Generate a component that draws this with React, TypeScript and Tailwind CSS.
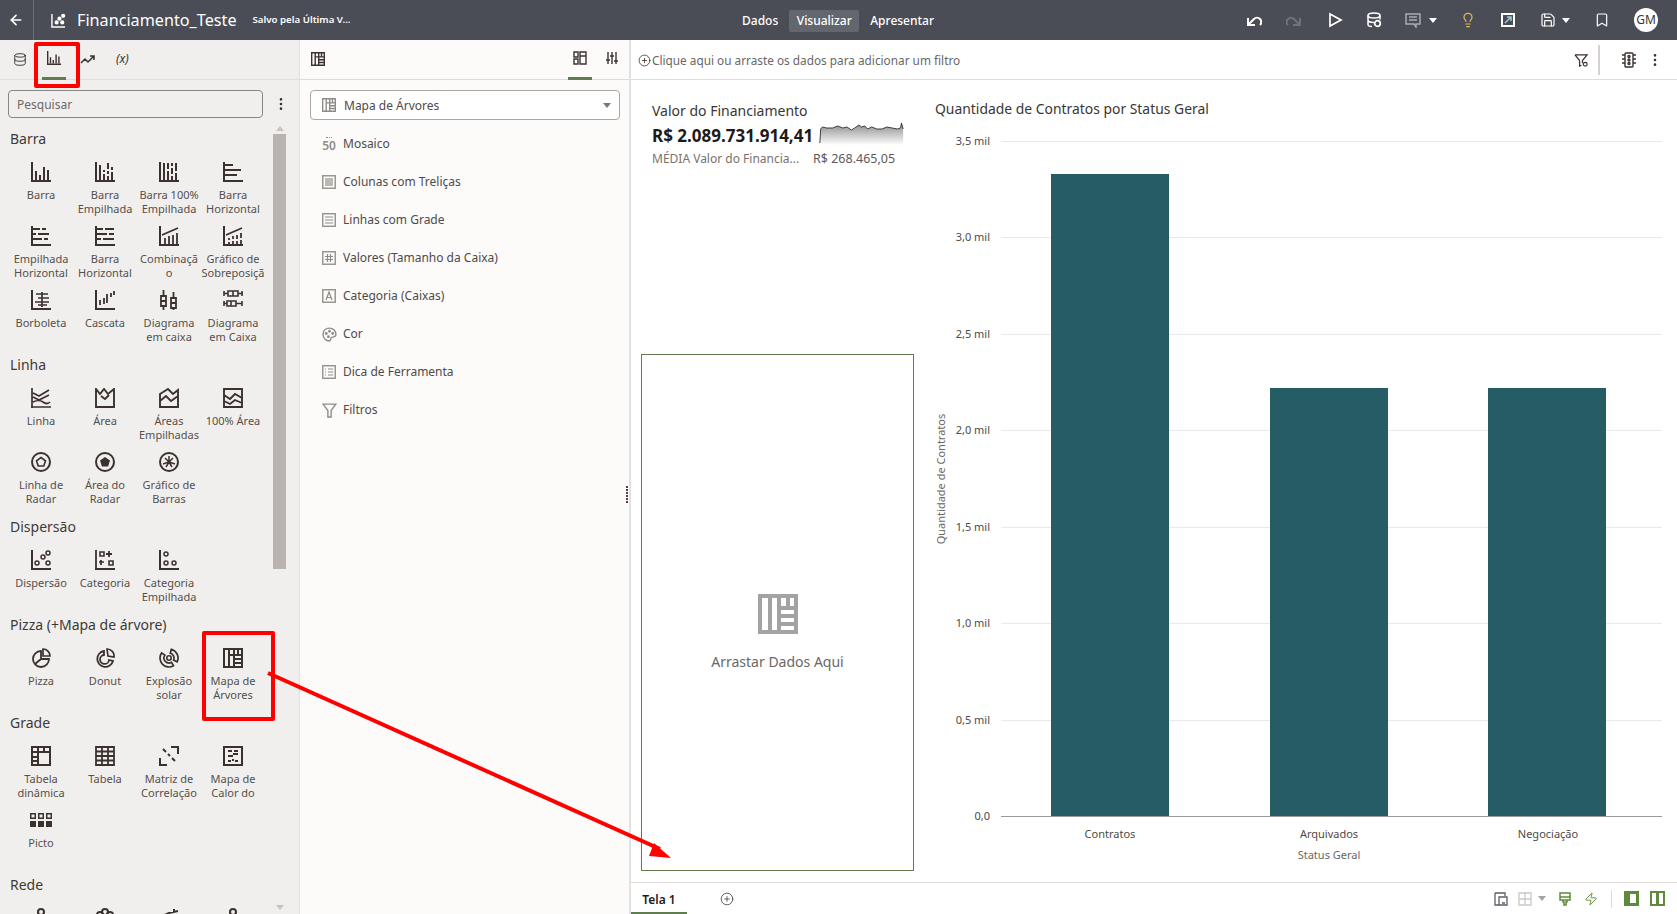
import type { ReactNode } from 'react';
import {
  ArrowLeft,
  Bookmark,
  CirclePlus,
  Database,
  EllipsisVertical,
  Lightbulb,
  Save,
  Zap,
} from 'lucide-react';

function Ico({ children, size = 20, className = '' }: { children: ReactNode; size?: number; className?: string }) {
  return (
    <svg
      viewBox="0 0 20 20"
      width={size}
      height={size}
      fill="none"
      stroke="currentColor"
      strokeWidth={2}
      className={className}
    >
      {children}
    </svg>
  );
}

const axis = <path d="M1 0v20M0 19h20" />;
const treemap = (
  <path
    d="M1 1h18v18H1zM6 1v18M11 1v18M6 7h13M11 11h8M11 15h8M15 1v6"
    strokeWidth={2}
  />
);

const shapes: Record<string, ReactNode> = {
  bar: <>{axis}<path d="M5 9v9M9 13v5M13 5v13M17 8v10" /></>,
  stacked: <>{axis}<path d="M5 3v15M9 8v2M9 12v6M13 1v6M13 9v3M13 14v4M17 5v3M17 10v8" /></>,
  stacked100: <>{axis}<path d="M5 1v17M9 1v6M9 9v9M13 1v3M13 6v6M13 14v4M17 1v8M17 11v7" /></>,
  hbar: <><path d="M1 0v20M0 19h20M2 3h8M2 8h16M2 13h12" /></>,
  hstacked: <><path d="M1 0v20M0 19h20M2 3h7M11 3h4M2 8h3M7 8h11M2 13h9M13 13h4" /></>,
  hbar2: <><path d="M1 0v20M0 19h20M2 3h6M10 3h9M2 8h10M14 8h5M2 13h4M8 13h11" /></>,
  combo: <>{axis}<path d="M3 9L19 2M6 12v6M10 10v8M14 9v9M18 7v11" strokeWidth={1.8} /></>,
  overlay: <>{axis}<path d="M3 9L19 2M6 12v2M6 16v2M10 10v3M10 15v3M14 9v4M14 15v3M18 7v5M18 14v4" strokeWidth={1.8} /></>,
  butterfly: <>{axis}<path d="M11 2v15M5 4h12M7 8h11M4 12h14M7 15h9" strokeWidth={1.7} /></>,
  waterfall: <>{axis}<path d="M5 10v5M9 8v6M12 4v9M16 3v4M19 1v4" strokeWidth={1.8} /></>,
  boxv: (
    <>
      <path d="M2 6h5v10H2zM12 8h5v10h-5zM4.500 0v6M4.500 16v4M14.500 2v6M14.500 18v2M2 11h5M12 13h5" strokeWidth={1.8} />
    </>
  ),
  boxh: (
    <>
      <path d="M5 1h10v5H5zM4 11h9v5H4zM1 3.500h4M15 3.500h5M1 13.500h3M13 13.500h6M1 1v5M19 1v5M1 11v5M19 11v5M10 1v5M8 11v5" strokeWidth={1.6} />
    </>
  ),
  line: <><path d="M1 0v20M0 19h20M2 5L8 8L18 2M2 9L8 12L18 7M2 14Q8 11 12 14T19 14" strokeWidth={1.7} /></>,
  area: <path d="M1 1v18h18V1L13 6L9 1L5 6z M6 8l4 3l4-4" strokeWidth={1.9} />,
  areas: <path d="M1 6L9 1L14 6L19 2v17H1zM1 13L7 8L12 13L19 8" strokeWidth={1.9} />,
  area100: <path d="M1 1h18v18H1zM1 7L7 11L12 6L19 10M1 13L7 16L12 12L19 15" strokeWidth={1.9} />,
  radarline: <><circle cx="10" cy="10" r="9" /><path d="M10 5.500l4.500 3.300l-1.700 5.200H7.200L5.500 8.800z" strokeWidth={1.6} /></>,
  radararea: <><circle cx="10" cy="10" r="9" /><path d="M10 5l5 3.600l-1.900 5.800H6.900L5 8.600z" fill="currentColor" stroke="none" /></>,
  radial: <><circle cx="10" cy="10" r="9" /><path d="M10 10V4M10 10l6 2M10 10l-6 2M10 10l-4-4M10 10l4-4M10 10l3 5M10 10l-3 5" strokeWidth={1.5} /></>,
  scatter: <><path d="M1 0v20M0 19h20" /><circle cx="6" cy="13" r="2" strokeWidth={1.5} /><circle cx="12" cy="7" r="2" strokeWidth={1.5} /><circle cx="17" cy="3" r="2" strokeWidth={1.5} /><circle cx="17" cy="13" r="2" strokeWidth={1.5} /></>,
  category: <><path d="M1 0v20M0 19h20M14 1v6M11 4h6M6 10v5" strokeWidth={1.8} /><path d="M5 2h4v4H5zM14 11h4v4h-4zM4 12h5" strokeWidth={1.6} /></>,
  catstack: <><path d="M1 0v20M0 19h20" /><circle cx="7" cy="4" r="2" strokeWidth={1.5} /><circle cx="7" cy="13" r="2" strokeWidth={1.5} /><circle cx="15" cy="13" r="2" strokeWidth={1.5} /></>,
  pie: <><path d="M10 3a8 8 0 1 0 8 8h-8z M10 11l-6 5" strokeWidth={1.8} /><path d="M12 1a7 7 0 0 1 7 7h-7z" strokeWidth={1.7} /></>,
  donut: <><path d="M9 3a8 8 0 1 0 9 10l-4-1a4.500 4.500 0 1 1-5-5z" strokeWidth={1.8} /><path d="M12 1a7 7 0 0 1 7 8l-6-1z" strokeWidth={1.7} /></>,
  sunburst: (
    <>
      <circle cx="10" cy="10" r="2.200" strokeWidth={1.600} />
      <path
        d="M12.330 1.310A9 9 0 0 1 18.160 13.800L14.530 12.110A5 5 0 0 0 11.290 5.170zM14.500 17.790A9 9 0 0 1 2.630 4.840L5.900 7.130A5 5 0 0 0 12.500 14.330z"
        strokeWidth={1.700}
      />
    </>
  ),
  treemap,
  pivot: <path d="M1 1h18v18H1zM1 6h18M7 1v18M13 1v5M1 11h6M1 15h6" />,
  table: <path d="M1 1h18v18H1zM1 5.500h18M1 10h18M1 14.500h18M7 1v18M13 1v18" strokeWidth={1.8} />,
  corr: <path d="M12 1h7v7M8 19H1v-7M4 3l3 3M9 8l2 2M13 12l3 3" />,
  heat: <path d="M1 1h18v18H1zM5 5h4M11 5h4M10 8h5M5 10h5M10 13v2M5 15h3M12 15h3" />,
  rede1: <><circle cx="10" cy="4" r="3" /><circle cx="4" cy="16" r="3" /><circle cx="16" cy="16" r="3" /></>,
  rede2: <><circle cx="5" cy="7" r="3" /><circle cx="10" cy="4" r="3" /><circle cx="15" cy="7" r="3" /></>,
  rede3: <path d="M1 9L10 5L19 3M15 1v4" />,
  rede4: <><circle cx="10" cy="4" r="3" /><path d="M10 7v9" /></>,
};

function Picto() {
  return (
    <svg viewBox="0 0 22 20" width={22} height={20} fill="currentColor">
      {[0, 8, 16].map((x) => (
        <rect key={x} x={x + 0.75} y={3.750} width={4.500} height={4.500} fill="none" stroke="currentColor" strokeWidth={1.500} />
      ))}
      {[0, 8, 16].map((x) => (
        <rect key={x} x={x} y={11} width={6} height={6} />
      ))}
    </svg>
  );
}

type Viz = [string, string];

const sections: { title: string; items: Viz[] }[] = [
  {
    title: 'Barra',
    items: [
      ['bar', 'Barra'],
      ['stacked', 'Barra\nEmpilhada'],
      ['stacked100', 'Barra 100%\nEmpilhada'],
      ['hbar', 'Barra\nHorizontal'],
      ['hstacked', 'Empilhada\nHorizontal'],
      ['hbar2', 'Barra\nHorizontal'],
      ['combo', 'Combinaçã\no'],
      ['overlay', 'Gráfico de\nSobreposiçã'],
      ['butterfly', 'Borboleta'],
      ['waterfall', 'Cascata'],
      ['boxv', 'Diagrama\nem caixa'],
      ['boxh', 'Diagrama\nem Caixa'],
    ],
  },
  {
    title: 'Linha',
    items: [
      ['line', 'Linha'],
      ['area', 'Área'],
      ['areas', 'Áreas\nEmpilhadas'],
      ['area100', '100% Área'],
      ['radarline', 'Linha de\nRadar'],
      ['radararea', 'Área do\nRadar'],
      ['radial', 'Gráfico de\nBarras'],
    ],
  },
  {
    title: 'Dispersão',
    items: [
      ['scatter', 'Dispersão'],
      ['category', 'Categoria'],
      ['catstack', 'Categoria\nEmpilhada'],
    ],
  },
  {
    title: 'Pizza (+Mapa de árvore)',
    items: [
      ['pie', 'Pizza'],
      ['donut', 'Donut'],
      ['sunburst', 'Explosão\nsolar'],
      ['treemap', 'Mapa de\nÁrvores'],
    ],
  },
  {
    title: 'Grade',
    items: [
      ['pivot', 'Tabela\ndinâmica'],
      ['table', 'Tabela'],
      ['corr', 'Matriz de\nCorrelação'],
      ['heat', 'Mapa de\nCalor do'],
      ['picto', 'Picto'],
    ],
  },
  {
    title: 'Rede',
    items: [
      ['rede1', ''],
      ['rede2', ''],
      ['rede3', ''],
      ['rede4', ''],
    ],
  },
];

function VizItem({ icon, label }: { icon: string; label: string }) {
  return (
    <div className="flex h-16 flex-col items-center">
      <div className="flex h-5 items-center text-[#3b322f]">
        {icon === 'picto' ? <Picto /> : <Ico>{shapes[icon]}</Ico>}
      </div>
      <div className="mt-[6px] w-16 overflow-hidden text-center text-[11px] leading-[14px] whitespace-pre-line text-[#55504c]">
        {label}
      </div>
    </div>
  );
}

function VizPanel() {
  return (
    <aside className="relative flex h-full w-[300px] shrink-0 flex-col overflow-hidden border-r border-[#e2e0de] bg-[#f1efed]">
      <div className="flex h-10 shrink-0 items-center border-b border-[#dfdddb] text-[#3b322f]">
        <div className="ml-[13px] flex w-[14px] justify-center">
          <Database size={15} strokeWidth={1.6} />
        </div>
        <div className="relative ml-[15px] flex h-10 w-[24px] items-center justify-center pb-[3px]">
          <Ico size={14}>{shapes.bar}</Ico>
          <div className="absolute right-0 bottom-0 left-0 h-[3px] bg-[#5f7d4f]" />
        </div>
        <svg viewBox="0 0 16 12" width={16} height={12} fill="none" stroke="currentColor" strokeWidth={1.500} className="mb-px ml-[14px]">
          <path d="M1 10l4-4l3 3l6-6M10 3h4v4" />
        </svg>
        <span className="mb-[2px] ml-[20px] text-[12px] italic">(x)</span>
      </div>
      <div className="flex shrink-0 items-center pt-[10px] pl-2">
        <div className="flex h-[28px] w-[255px] items-center rounded-[4px] border border-[#8a8582] px-2 pt-px text-[12px] text-[#6f6865]">
          Pesquisar
        </div>
        <EllipsisVertical size={16} className="ml-[10px] text-[#3b322f]" />
      </div>
      <div className="relative flex-1 overflow-hidden">
        <div className="absolute top-[8px] right-[13px] bottom-[20px] w-[13px]">
          <div className="absolute top-0 left-[3px] border-x-[4px] border-b-[5px] border-x-transparent border-b-[#c7c3bf]" />
          <div className="absolute top-[8px] right-0 left-0 h-[435px] bg-[#b9b4b0]" />
        </div>
        <div className="absolute right-[13px] bottom-[4px] w-[13px]">
          <div className="mx-auto h-0 w-0 border-x-[4px] border-t-[5px] border-x-transparent border-t-[#c7c3bf]" />
        </div>
        <div className="pt-[10px] pl-[9px]">
          {sections.map((s) => (
            <div key={s.title}>
              <div className="mb-3 h-[22px] pl-px text-[14px] leading-[22px] text-[#3e3a37]">{s.title}</div>
              <div className="grid w-64 grid-cols-4">
                {s.items.map(([icon, label], i) => (
                  <VizItem key={i} icon={icon} label={label} />
                ))}
              </div>
            </div>
          ))}
        </div>
      </div>
    </aside>
  );
}

function BoxGlyph({ children }: { children: ReactNode }) {
  return (
    <svg viewBox="0 0 14 14" width={14} height={14} fill="none" stroke="#8f8b87" strokeWidth={1.200}>
      <rect x={0.750} y={0.750} width={12.500} height={12.500} stroke="#9a9692" strokeWidth={1.500} />
      {children}
    </svg>
  );
}

const grammar: { label: string; icon: ReactNode }[] = [
  {
    label: 'Mosaico',
    icon: (
      <span className="flex flex-col items-center text-[12px] leading-[10px] font-semibold text-[#8f8b87]">
        <span className="mb-px h-[3px] w-[6px] border-t border-dotted border-[#8f8b87]" />
        50
      </span>
    ),
  },
  { label: 'Colunas com Treliças', icon: <BoxGlyph><path d="M4 3v8M6 3v8M8 3v8M10 3v8" /></BoxGlyph> },
  { label: 'Linhas com Grade', icon: <BoxGlyph><path d="M3 4h8M3 7h8M3 10h8" /></BoxGlyph> },
  { label: 'Valores (Tamanho da Caixa)', icon: <BoxGlyph><path d="M5.500 3v8M8.500 3v8M3 5.500h8M3 8.500h8" /></BoxGlyph> },
  { label: 'Categoria (Caixas)', icon: <BoxGlyph><path d="M4 11l3-8l3 8M5 8.500h4" /></BoxGlyph> },
  {
    label: 'Cor',
    icon: (
      <svg viewBox="0 0 14 14" width={15} height={15} fill="none" stroke="#8f8b87" strokeWidth={1.300}>
        <path d="M7 1C3 1 1 4 1 7c0 3 2.500 6 6 6c1.500 0 1-2 1.500-3c.5-1 4.500 0 4.500-3c0-3-2.500-6-6-6z" />
        <circle cx="4" cy="6" r=".7" /><circle cx="7" cy="4" r=".7" /><circle cx="6" cy="9" r=".7" /><circle cx="10" cy="6" r=".7" />
      </svg>
    ),
  },
  { label: 'Dica de Ferramenta', icon: <BoxGlyph><path d="M3 4h1M6 4h5M3 7h1M6 7h5M3 10h1M6 10h5" /></BoxGlyph> },
  {
    label: 'Filtros',
    icon: (
      <svg viewBox="0 0 14 14" width={15} height={15} fill="none" stroke="#8f8b87" strokeWidth={1.300}>
        <path d="M1 1h12L8.500 7v6h-3V7z" />
      </svg>
    ),
  },
];

function GrammarPanel() {
  return (
    <section className="flex h-full w-[331px] shrink-0 flex-col border-r-2 border-[#e4e2e0] bg-[#fcfbfa]">
      <div className="flex h-10 shrink-0 items-center border-b border-[#dfdddb] text-[#3b322f]">
        <div className="mb-[2px] ml-[11px] text-[#3b322f]">
          <Ico size={14}>{shapes.treemap}</Ico>
        </div>
        <div className="relative ml-auto flex h-10 w-[24px] items-center justify-center pb-[3px]">
          <svg viewBox="0 0 14 14" width={14} height={14} fill="none" stroke="currentColor" strokeWidth={1.400}>
            <path d="M1 1h4v5H1zM1 8h4v5H1zM7 1h6v12H7zM7 5h6" />
          </svg>
          <div className="absolute right-0 bottom-0 left-0 h-[3px] bg-[#5f7d4f]" />
        </div>
        <svg viewBox="0 0 14 14" width={14} height={14} fill="none" stroke="currentColor" strokeWidth={1.400} className="mr-[10px] mb-[3px] ml-[13px]">
          <path d="M3 1v12M7 1v12M11 1v12M1 9h4M5 5h4M9 10h4" />
        </svg>
      </div>
      <div className="mt-[10px] mr-[9px] ml-[10px] flex h-[30px] shrink-0 items-center rounded-[4px] border border-[#a9a6a3] bg-white pr-[8px] pl-[11px]">
        <Ico size={14} className="text-[#8f8b87]">{shapes.treemap}</Ico>
        <span className="ml-[8px] pt-px text-[12px] text-[#4f4a47]">Mapa de Árvores</span>
        <div className="ml-auto h-0 w-0 border-x-[4px] border-t-[5px] border-x-transparent border-t-[#7d7874]" />
      </div>
      <div className="mt-[5px]">
        {grammar.map((g) => (
          <div key={g.label} className="flex h-[38px] items-center pl-[21px]">
            <div className="flex w-[16px] justify-center">{g.icon}</div>
            <span className="ml-[6px] text-[12px] text-[#4f4a47]">{g.label}</span>
          </div>
        ))}
      </div>
    </section>
  );
}

const sparkPts =
  '1,22 2,8 4,6 9,7 16,7 22,5 28,7 33,6 38,9 42,7 47,4 50,6 54,5 57,8 62,6 68,8 74,8 80,6 86,7 92,8 96,7 97,2 99,8';

function KpiCard() {
  return (
    <div className="pt-[22px] pl-[11px]">
      <div className="text-[14px] leading-[18px] text-[#3b3633]">Valor do Financiamento</div>
      <div className="mt-[4px] flex h-[24px] items-center">
        <span className="text-[17px] font-bold whitespace-nowrap text-[#1d1b1a]">R$ 2.089.731.914,41</span>
        <svg viewBox="0 0 100 24" width={85} height={24} className="-mt-[3px] ml-[6px] self-start" preserveAspectRatio="none">
          <defs>
            <linearGradient id="spark" x1="0" y1="0" x2="0" y2="1">
              <stop offset="0" stopColor="#8a8a8a" />
              <stop offset="1" stopColor="#ffffff" />
            </linearGradient>
          </defs>
          <polygon points={`${sparkPts} 99,24 1,24`} fill="url(#spark)" />
          <polyline points={sparkPts} fill="none" stroke="#333333" strokeWidth={1} />
        </svg>
      </div>
      <div className="mt-[3px] flex text-[12px] leading-[16px] whitespace-nowrap text-[#77726e]">
        <span className="w-[161px]">MÉDIA Valor do Financia...</span>
        <span className="text-[12.500px] text-[#5f5a57]">R$ 268.465,05</span>
      </div>
    </div>
  );
}

function DropZone() {
  return (
    <div className="flex h-[517px] w-[273px] flex-col items-center border border-[#5f7d4f] pt-[239px]">
      <svg viewBox="0 0 40 40" width={40} height={40} fill="none" stroke="#a3a3a3" strokeWidth={4}>
        <path d="M2 2h36v36H2zM12 2v36M21 2v36M21 14h17M21 22h17M21 30h17M30 2v12" />
      </svg>
      <div className="mt-[18px] text-[14px] leading-[20px] text-[#6a6765]">Arrastar Dados Aqui</div>
    </div>
  );
}

const yTicks = [
  ['3,5 mil', 141],
  ['3,0 mil', 237],
  ['2,5 mil', 334],
  ['2,0 mil', 430],
  ['1,5 mil', 527],
  ['1,0 mil', 623],
  ['0,5 mil', 720],
] as const;

const bars = [
  { x: 1051, w: 118, y: 174, label: 'Contratos' },
  { x: 1270, w: 118, y: 388, label: 'Arquivados' },
  { x: 1488, w: 118, y: 388, label: 'Negociação' },
];

function BarChart() {
  return (
    <svg
      viewBox="925 80 752 802"
      width={752}
      height={802}
      className="shrink-0"
      style={{ fontFamily: '"Noto Sans", sans-serif' }}
    >
      <text x={935} y={114} fontSize={13.900} fill="#3b3633">Quantidade de Contratos por Status Geral</text>
      {yTicks.map(([t, y]) => (
        <g key={t}>
          <line x1={1001} x2={1662} y1={y + 0.5} y2={y + 0.5} stroke="#e9e9ec" />
          <text x={990} y={y + 4} fontSize={11} textAnchor="end" fill="#4f4a47">{t}</text>
        </g>
      ))}
      <text x={990} y={820} fontSize={11} textAnchor="end" fill="#4f4a47">0,0</text>
      {bars.map((b) => (
        <g key={b.label}>
          <rect x={b.x} y={b.y} width={b.w} height={816 - b.y} fill="#265c64" />
          <text x={b.x + b.w / 2 + (b.x === 1488 ? 1 : 0)} y={838} fontSize={11} textAnchor="middle" fill="#4f4a47">{b.label}</text>
        </g>
      ))}
      <line x1={1001} x2={1662} y1={816.5} y2={816.5} stroke="#9a9a9a" />
      <text x={1329} y={859} fontSize={11} textAnchor="middle" fill="#6a6765">Status Geral</text>
      <text
        x={0}
        y={0}
        fontSize={11}
        textAnchor="middle"
        fill="#6a6765"
        transform="translate(945 479) rotate(-90)"
      >
        Quantidade de Contratos
      </text>
    </svg>
  );
}

function TopBar() {
  return (
    <header className="flex h-10 shrink-0 items-center bg-[#4a4d55] text-white">
      <div className="flex h-10 w-[34px] items-center justify-center border-r border-[#6b6e75] pr-[2px]">
        <ArrowLeft size={16} strokeWidth={2.5} />
      </div>
      <svg viewBox="0 0 16 16" width={15} height={15} fill="none" stroke="currentColor" strokeWidth={1.500} className="ml-[17px]">
        <path d="M1 1v14h14" />
        <circle cx="6" cy="10" r="1.500" fill="currentColor" />
        <circle cx="9" cy="6" r="1.500" fill="currentColor" />
        <circle cx="13" cy="3" r="1.500" fill="currentColor" />
        <circle cx="12" cy="10" r="1.500" fill="currentColor" />
      </svg>
      <span className="ml-[11px] text-[16.200px] leading-none">Financiamento_Teste</span>
      <span className="ml-[16px] text-[9.700px] font-semibold">Salvo pela Última V...</span>
      <nav className="absolute left-[742px] flex h-10 items-center pt-px text-[12px] font-medium">
        <span>Dados</span>
        <span className="ml-[11px] flex h-[22px] w-[70px] items-center justify-center rounded-[2px] bg-[#63666d]">
          Visualizar
        </span>
        <span className="ml-[11px]">Apresentar</span>
      </nav>
      <div className="ml-auto flex items-center pr-[19px]">
        <svg viewBox="0 0 16 16" width={16} height={16} fill="none" stroke="currentColor" strokeWidth={2}>
          <path d="M2 6v7h7M2 13l6-6a4 4 0 0 1 6 6" />
        </svg>
        <svg viewBox="0 0 16 16" width={16} height={16} fill="none" stroke="#6f7278" strokeWidth={2} className="ml-[24px]">
          <path d="M14 6v7H7M14 13L8 7a4 4 0 0 0-6 6" />
        </svg>
        <svg viewBox="0 0 16 16" width={16} height={16} fill="none" stroke="currentColor" strokeWidth={1.700} className="ml-[25px]">
          <path d="M3 2l11 6l-11 6z" />
        </svg>
        <svg viewBox="0 0 16 16" width={16} height={16} fill="none" stroke="currentColor" strokeWidth={1.500} className="ml-[23px]">
          <ellipse cx="8" cy="3.500" rx="6" ry="2.500" />
          <path d="M2 3.500v9c0 1 1.500 2 4 2M14 3.500v4M2 8c0 1 2 2.500 6 2.500" />
          <circle cx="11.500" cy="11.500" r="2.800" strokeWidth={1.700} />
        </svg>
        <svg viewBox="0 0 16 16" width={16} height={16} fill="none" stroke="#a9abaf" strokeWidth={1.500} className="ml-[23px]">
          <path d="M1 2h14v10H11v3l-2-3H1zM4 5h8M4 8h8" />
        </svg>
        <div className="ml-[8px] h-0 w-0 border-x-[4px] border-t-[5px] border-x-transparent border-t-white" />
        <Lightbulb size={16} strokeWidth={1.800} className="ml-[23px] text-[#e7b95f]" />
        <svg viewBox="0 0 16 16" width={16} height={16} fill="none" stroke="currentColor" strokeWidth={2} className="ml-[24px]">
          <path d="M2 2h12v12H2z" />
          <path d="M5 11l6-6M7 5h4v4" strokeWidth={1.500} stroke="#9fc7d6" />
        </svg>
        <Save size={16} strokeWidth={1.800} className="ml-[24px]" />
        <div className="ml-[6px] h-0 w-0 border-x-[4px] border-t-[5px] border-x-transparent border-t-white" />
        <Bookmark size={16} strokeWidth={1.800} className="ml-[24px]" />
        <div className="ml-[24px] flex h-6 w-6 items-center justify-center rounded-full bg-white text-[12px] text-[#3b3633]">
          GM
        </div>
      </div>
    </header>
  );
}

function FilterBar() {
  return (
    <div className="flex h-10 shrink-0 items-center border-b border-[#dfdddb] bg-white pt-px pl-[7px] text-[#3b322f]">
      <CirclePlus size={13} strokeWidth={1.500} />
      <span className="ml-px pt-px text-[11.800px] text-[#6a6765]">Clique aqui ou arraste os dados para adicionar um filtro</span>
      <svg viewBox="0 0 16 16" width={15} height={15} fill="none" stroke="currentColor" strokeWidth={1.300} className="mr-[-1px] ml-auto">
        <path d="M1 2h13L9 8v3M6 8L1 2M6 8v6l2-1" />
        <circle cx="12" cy="12" r="2" />
      </svg>
      <div className="ml-[10px] h-[30px] w-[2px] bg-[#d4d1ce]" />
      <svg viewBox="0 0 16 16" width={16} height={16} fill="none" stroke="currentColor" strokeWidth={1.400} className="ml-[21px]">
        <rect x="4" y="1" width="8" height="14" rx="1" />
        <circle cx="8" cy="4.500" r="1" /><circle cx="8" cy="8" r="1" /><circle cx="8" cy="11.500" r="1" />
        <path d="M1 3h3M1 7h3M1 11h3M12 3h3M12 7h3M12 11h3" />
      </svg>
      <EllipsisVertical size={16} className="mr-[14px] ml-[10px]" />
    </div>
  );
}

function BottomBar() {
  return (
    <div className="flex h-8 shrink-0 items-center border-t border-[#dfdddb] bg-white">
      <div className="relative flex h-[31px] w-[56px] items-center justify-center pt-[2px] text-[12px] font-semibold text-[#1d1b1a]">
        Tela 1
        <div className="absolute right-0 bottom-0 left-0 h-[2px] bg-[#5f7d4f]" />
      </div>
      <CirclePlus size={14} strokeWidth={1.300} className="ml-[33px] text-[#3b322f]" />
      <div className="ml-auto flex items-center pr-[12px]">
        <svg viewBox="0 0 14 14" width={14} height={14} fill="none" stroke="#5a5e66" strokeWidth={1.300}>
          <path d="M1 1h10v3M1 1v12h4M5 5h8v8H5zM8 11h3" />
        </svg>
        <svg viewBox="0 0 14 14" width={14} height={14} fill="none" stroke="#c9c9c9" strokeWidth={1.300} className="ml-[10px]">
          <path d="M1 1h12v12H1zM7 1v12M1 7h12" />
        </svg>
        <div className="ml-[6px] h-0 w-0 border-x-[4px] border-t-[5px] border-x-transparent border-t-[#a3a3a3]" />
        <svg viewBox="0 0 14 14" width={14} height={14} fill="none" stroke="#5f8a3c" strokeWidth={1.500} className="ml-[12px]">
          <path d="M2 1h10v7H2zM2 5h10M5 8v2h1v3h2v-3h1V8" />
        </svg>
        <Zap size={14} strokeWidth={1.600} className="ml-[12px] text-[#5f8a3c]" />
        <div className="ml-[13px] h-[18px] w-px bg-[#dfdddb]" />
        <div className="ml-[12px] h-[15px] w-[15px] border-[3px] border-l-[6px] border-[#5f8a3c]" />
        <div className="ml-[11px] flex h-[15px] w-[15px] justify-center border-[2px] border-[#5f8a3c]">
          <div className="h-full w-[3px] bg-[#5f8a3c]" />
        </div>
      </div>
    </div>
  );
}

function Callouts() {
  return (
    <>
      <div className="absolute top-[42px] left-[34px] h-[46px] w-[46px] rounded-[2px] border-4 border-[#ff0000]" />
      <div className="absolute top-[631px] left-[202px] h-[90px] w-[73px] rounded-[2px] border-4 border-[#ff0000]" />
      <svg viewBox="0 0 1677 914" width={1677} height={914} className="pointer-events-none absolute top-0 left-0">
        <line x1={268} y1={673} x2={660} y2={849} stroke="#ff0000" strokeWidth={4} />
        <polygon points="671,858 654,843 649,856" fill="#ff0000" />
      </svg>
    </>
  );
}

export default function App() {
  return (
    <div
      className="relative flex h-[914px] w-[1677px] flex-col overflow-hidden bg-white"
      style={{ fontFamily: '"Noto Sans", sans-serif' }}
    >
      <TopBar />
      <main className="flex min-h-0 flex-1">
        <VizPanel />
        <div className="relative">
          <GrammarPanel />
          <div className="absolute top-[446px] right-[3px] flex flex-col gap-[1px]">
            {[0, 1, 2, 3, 4, 5].map((i) => (
              <div key={i} className="h-[2px] w-[2px] bg-[#5a3a4a]" />
            ))}
          </div>
        </div>
        <div className="flex min-w-0 flex-1 flex-col">
          <FilterBar />
          <div className="flex min-h-0 flex-1">
            <div className="flex w-[294px] shrink-0 flex-col justify-between pb-[11px] pl-[10px]">
              <KpiCard />
              <DropZone />
            </div>
            <BarChart />
          </div>
          <BottomBar />
        </div>
      </main>
      <Callouts />
    </div>
  );
}
